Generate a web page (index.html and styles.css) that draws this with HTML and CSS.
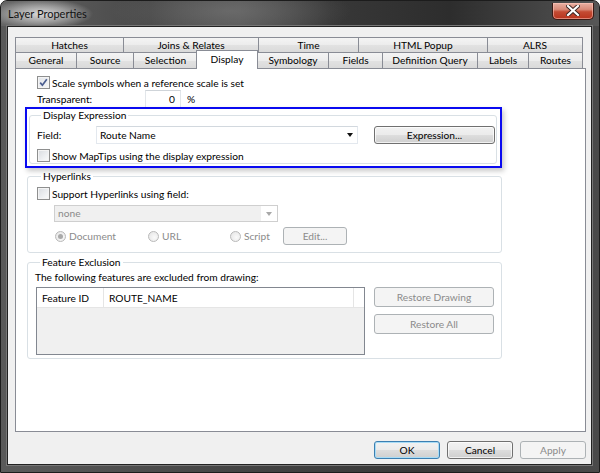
FILE: index.html
```html
<!DOCTYPE html>
<html>
<head>
<meta charset="utf-8">
<link rel="stylesheet" href="styles.css">
</head>
<body>
<div class="window">
  <div class="titlebar">
    <span class="title">Layer Properties</span>
    <div class="close">
      <svg width="14" height="11" viewBox="0 0 14 11"><path d="M2 1 L12 10 M12 1 L2 10" stroke="#3a2320" stroke-width="4" stroke-linecap="square"/><path d="M2 1 L12 10 M12 1 L2 10" stroke="#fff" stroke-width="2.2" stroke-linecap="square"/></svg>
    </div>
  </div>
  <div class="client">
    <div class="tabs">
      <div class="tabrow row1">
        <div class="tab">Hatches</div>
        <div class="tab">Joins &amp; Relates</div>
        <div class="tab">Time</div>
        <div class="tab">HTML Popup</div>
        <div class="tab">ALRS</div>
      </div>
      <div class="tabrow row2">
        <div class="tab">General</div>
        <div class="tab">Source</div>
        <div class="tab">Selection</div>
        <div class="tab active">Display</div>
        <div class="tab">Symbology</div>
        <div class="tab">Fields</div>
        <div class="tab">Definition Query</div>
        <div class="tab">Labels</div>
        <div class="tab">Routes</div>
      </div>
    </div>
    <div class="panel">
      <div class="check-row scale-row">
        <span class="cb checked"><svg width="9" height="9" viewBox="0 0 9 9"><path d="M1.2 4.6 L3.4 7.2 L7.8 1.2" fill="none" stroke="#4a5d8f" stroke-width="1.7"/></svg></span>
        <span>Scale symbols when a reference scale is set</span>
      </div>
      <div class="transp-row">
        <span class="transp-label">Transparent:</span>
        <span class="numbox">0</span>
        <span class="pct">%</span>
      </div>
      <div class="highlight">
        <fieldset class="group de-group">
          <legend>Display Expression</legend>
          <div class="field-row">
            <span class="field-label">Field:</span>
            <div class="combo field-combo"><span>Route Name</span><span class="arrow"></span></div>
            <div class="btn expr-btn">Expression...</div>
          </div>
          <div class="check-row maptips-row">
            <span class="cb"></span>
            <span>Show MapTips using the display expression</span>
          </div>
        </fieldset>
      </div>
      <fieldset class="group hyper-group">
        <legend>Hyperlinks</legend>
        <div class="check-row">
          <span class="cb"></span>
          <span>Support Hyperlinks using field:</span>
        </div>
        <div class="combo disabled-combo"><span class="dc-text">none</span><span class="dc-btn"><span class="arrow gray"></span></span></div>
        <div class="radio-row">
          <span class="radio-item r-doc"><span class="radio on"></span>Document</span>
          <span class="radio-item r-url"><span class="radio"></span>URL</span>
          <span class="radio-item r-script"><span class="radio"></span>Script</span>
          <div class="btn disabled edit-btn">Edit...</div>
        </div>
      </fieldset>
      <fieldset class="group fe-group">
        <legend>Feature Exclusion</legend>
        <div class="fe-desc">The following features are excluded from drawing:</div>
        <div class="fe-body">
          <div class="listview">
            <div class="lv-header">
              <span class="col c1">Feature ID</span>
              <span class="col c2">ROUTE_NAME</span>
              <span class="col c3"></span>
            </div>
          </div>
          <div class="fe-buttons">
            <div class="btn disabled side-btn">Restore Drawing</div>
            <div class="btn disabled side-btn">Restore All</div>
          </div>
        </div>
      </fieldset>
    </div>
    <div class="footer">
      <div class="btn default foot-btn">OK</div>
      <div class="btn foot-btn">Cancel</div>
      <div class="btn disabled foot-btn">Apply</div>
    </div>
  </div>
</div>
</body>
</html>
```
FILE: styles.css
```css
* { box-sizing: border-box; }
html, body { margin: 0; padding: 0; }
body {
  width: 600px;
  height: 473px;
  overflow: hidden;
  background: #fff;
  font-family: Lato, "Noto Sans", sans-serif;
  font-size: 10.2px;
  color: #000;
}
.window {
  width: 600px;
  height: 473px;
  display: flex;
  flex-direction: column;
  border: 1px solid #1c1c1c;
  border-radius: 7px 7px 0 0;
  background: linear-gradient(90deg, #5a5a5a 0%, #444 40%, #383838 70%, #4a4a4a 100%);
}
.titlebar {
  height: 25px;
  flex: none;
  display: flex;
  align-items: center;
  justify-content: space-between;
  padding-left: 7px;
  border-radius: 6px 6px 0 0;
  background:
    radial-gradient(ellipse 52px 15px at 40px 13px, rgba(225,225,225,0.95), rgba(195,195,195,0.6) 55%, rgba(160,160,160,0) 100%),
    radial-gradient(ellipse 120px 30px at 230px 10px, rgba(115,115,115,0.7), rgba(115,115,115,0) 100%),
    linear-gradient(90deg, #666 0%, #474747 25%, #535353 40%, #383838 55%, #2d2d2d 75%, #474747 92%, #575757 100%);
}
.title {
  font-size: 11px;
  color: #111;
}
.close {
  width: 42px;
  height: 17px;
  margin-right: 5px;
  margin-bottom: 5px;
  border: 1px solid #3b1a14;
  border-top: none;
  border-radius: 0 0 5px 5px;
  background: linear-gradient(#e9b0a3 0%, #d98a78 40%, #c44b33 55%, #b8331d 100%);
  box-shadow: inset 0 0 0 1px rgba(255,200,190,0.55);
  display: flex;
  align-items: center;
  justify-content: center;
}
.client {
  flex: 1;
  margin: 0 7px 7px 6px;
  background: #f0f0f0;
  border: 1px solid #222;
  box-shadow: 0 0 0 1px #777;
  padding: 10px 5px 0 7px;
  display: flex;
  flex-direction: column;
}
.tabs { flex: none; width: 568px; }
.tabrow { display: grid; }
.row1 { grid-template-columns: 108px 135px 100px 129px 96px; height: 15px; }
.row2 { grid-template-columns: 61px 57px 64px 60px 71px 54px 95px 51px 55px; height: 16px; }
.tab {
  border: 1px solid #898c95;
  border-bottom: none;
  margin-right: -1px;
  background: linear-gradient(#f4f4f4 0%, #ececec 50%, #e2e2e2 51%, #dadada 100%);
  text-align: center;
  line-height: 14px;
  white-space: nowrap;
  color: #000;
}
.row1 .tab:last-child, .row2 .tab:last-child { margin-right: 0; }
.tab.active {
  position: relative;
  z-index: 2;
  background: #fff;
  margin: -2px -1px -1px -1px;
  line-height: 16px;
}
.panel {
  flex: none;
  width: 571px;
  height: 364px;
  background: #fff;
  border: 1px solid #898c95;
  display: flex;
  flex-direction: column;
  align-items: flex-start;
}
.check-row {
  display: flex;
  align-items: center;
  height: 13px;
  white-space: nowrap;
}
.cb {
  width: 13px;
  height: 13px;
  flex: none;
  margin-right: 2px;
  border: 1px solid #8e8f8f;
  background: linear-gradient(135deg, #d8dbe0 0%, #eef0f2 60%, #fbfbfb 100%);
  box-shadow: inset 0 0 0 1px #f4f4f4;
  display: flex;
  align-items: center;
  justify-content: center;
}
.cb.checked { background: linear-gradient(135deg, #e2e5ea 0%, #f5f6f7 100%); }
.scale-row { margin: 7px 0 0 21px; }
.transp-row {
  display: flex;
  align-items: center;
  height: 18px;
  margin: 1px 0 0 21px;
}
.transp-label { width: 108px; }
.numbox {
  width: 36px;
  height: 18px;
  border: 1px solid #e2e6ea;
  border-top-color: #cfd4d9;
  text-align: right;
  padding-right: 5px;
  line-height: 16px;
}
.pct { margin-left: 6px; }
.highlight {
  width: 477px;
  height: 61px;
  margin: -1px 0 0 9px;
  border: 2px solid #0a0af0;
  box-shadow: 2px 3px 5px rgba(0,0,0,0.22);
  position: relative;
  z-index: 1;
  background: #fff;
  padding: 0 3px 0 2px;
}
fieldset.group {
  margin: 0;
  border: 1px solid #d9e0e5;
  border-radius: 3px;
  min-width: 0;
}
fieldset.group legend {
  padding: 0 2px;
  margin-left: 4px;
  line-height: 13px;
  color: #000;
}
.de-group {
  padding: 0 0 1px 7px;
}
.field-row {
  display: flex;
  align-items: center;
  height: 19px;
  margin-top: 3px;
}
.field-label { width: 59px; }
.combo {
  display: flex;
  align-items: center;
  justify-content: space-between;
  height: 18px;
  background: #fff;
}
.field-combo {
  width: 262px;
  border: 1px solid #e3e8ee;
  border-top-color: #d2d8de;
  padding: 0 4px 0 3px;
}
.arrow {
  width: 0;
  height: 0;
  border-left: 3.5px solid transparent;
  border-right: 3.5px solid transparent;
  border-top: 4px solid #111;
}
.arrow.gray { border-top-color: #a8a8a8; }
.btn {
  display: flex;
  align-items: center;
  justify-content: center;
  height: 18px;
  border: 1px solid #707070;
  border-radius: 3px;
  background: linear-gradient(#f2f2f2 0%, #ebebeb 48%, #dddddd 52%, #cfcfcf 100%);
  box-shadow: inset 0 0 0 1px rgba(255,255,255,0.7);
  color: #000;
  white-space: nowrap;
}
.btn.disabled {
  border-color: #adb2b5;
  background: #f4f4f4;
  box-shadow: none;
  color: #8b8b8b;
}
.btn.default {
  border-color: #3c7fb1;
  box-shadow: inset 0 0 0 1px #a8dcf6;
}
.expr-btn { width: 121px; margin-left: 16px; height: 18px; }
.maptips-row { margin-top: 5px; }
.hyper-group {
  width: 475px;
  margin: 2px 0 0 11px !important;
  padding: 0 0 7px 9px;
}
.hyper-group .check-row { margin-top: 4px; }
.disabled-combo {
  width: 224px;
  height: 17px;
  margin: 5px 0 0 17px;
  border: 1px solid #cfcfcf;
  padding: 0;
  align-items: stretch;
}
.dc-text {
  flex: 1;
  background: #f0f0f0;
  color: #8a8a8a;
  padding-left: 3px;
  line-height: 15px;
}
.dc-btn {
  width: 16px;
  display: flex;
  align-items: center;
  justify-content: center;
  background: #fff;
}
.radio-row {
  display: flex;
  align-items: center;
  height: 18px;
  margin-top: 5px;
  margin-left: 18px;
  color: #8b8b8b;
}
.radio-item { display: flex; align-items: center; }
.radio {
  width: 11px;
  height: 11px;
  border-radius: 50%;
  border: 1px solid #b9b9b9;
  background: radial-gradient(circle at 60% 60%, #fafafa, #e3e3e3);
  margin-right: 3px;
  display: flex;
  align-items: center;
  justify-content: center;
}
.radio.on::after {
  content: "";
  width: 5px;
  height: 5px;
  border-radius: 50%;
  background: #a9a9a9;
}
.r-doc { width: 93px; }
.r-url { width: 82px; }
.r-script { width: 53px; }
.edit-btn { width: 64px; }
.fe-group {
  width: 475px;
  margin: 3px 0 0 11px !important;
  padding: 0 0 3px 8px;
}
.fe-desc { margin: 2px 0 0 -1px; line-height: 12px; }
.fe-body {
  display: flex;
  align-items: flex-start;
  margin-top: 4px;
}
.listview {
  width: 329px;
  height: 68px;
  border: 1px solid #828790;
  background: #f0f0f0;
}
.lv-header {
  display: flex;
  height: 20px;
  background: #fff;
  border-bottom: 1px solid #e5e5e5;
}
.col {
  display: flex;
  align-items: center;
  padding-left: 5px;
  border-right: 1px solid #e5e5e5;
}
.c1 { width: 67px; }
.c2 { width: 250px; }
.c3 { flex: 1; border-right: none; }
.fe-buttons {
  display: flex;
  flex-direction: column;
  gap: 7px;
  margin-left: 9px;
}
.side-btn { width: 120px; height: 20px; }
.footer {
  display: flex;
  justify-content: flex-end;
  gap: 7px;
  margin-top: 9px;
  width: 571px;
}
.foot-btn { width: 66px; height: 18px; }
```
